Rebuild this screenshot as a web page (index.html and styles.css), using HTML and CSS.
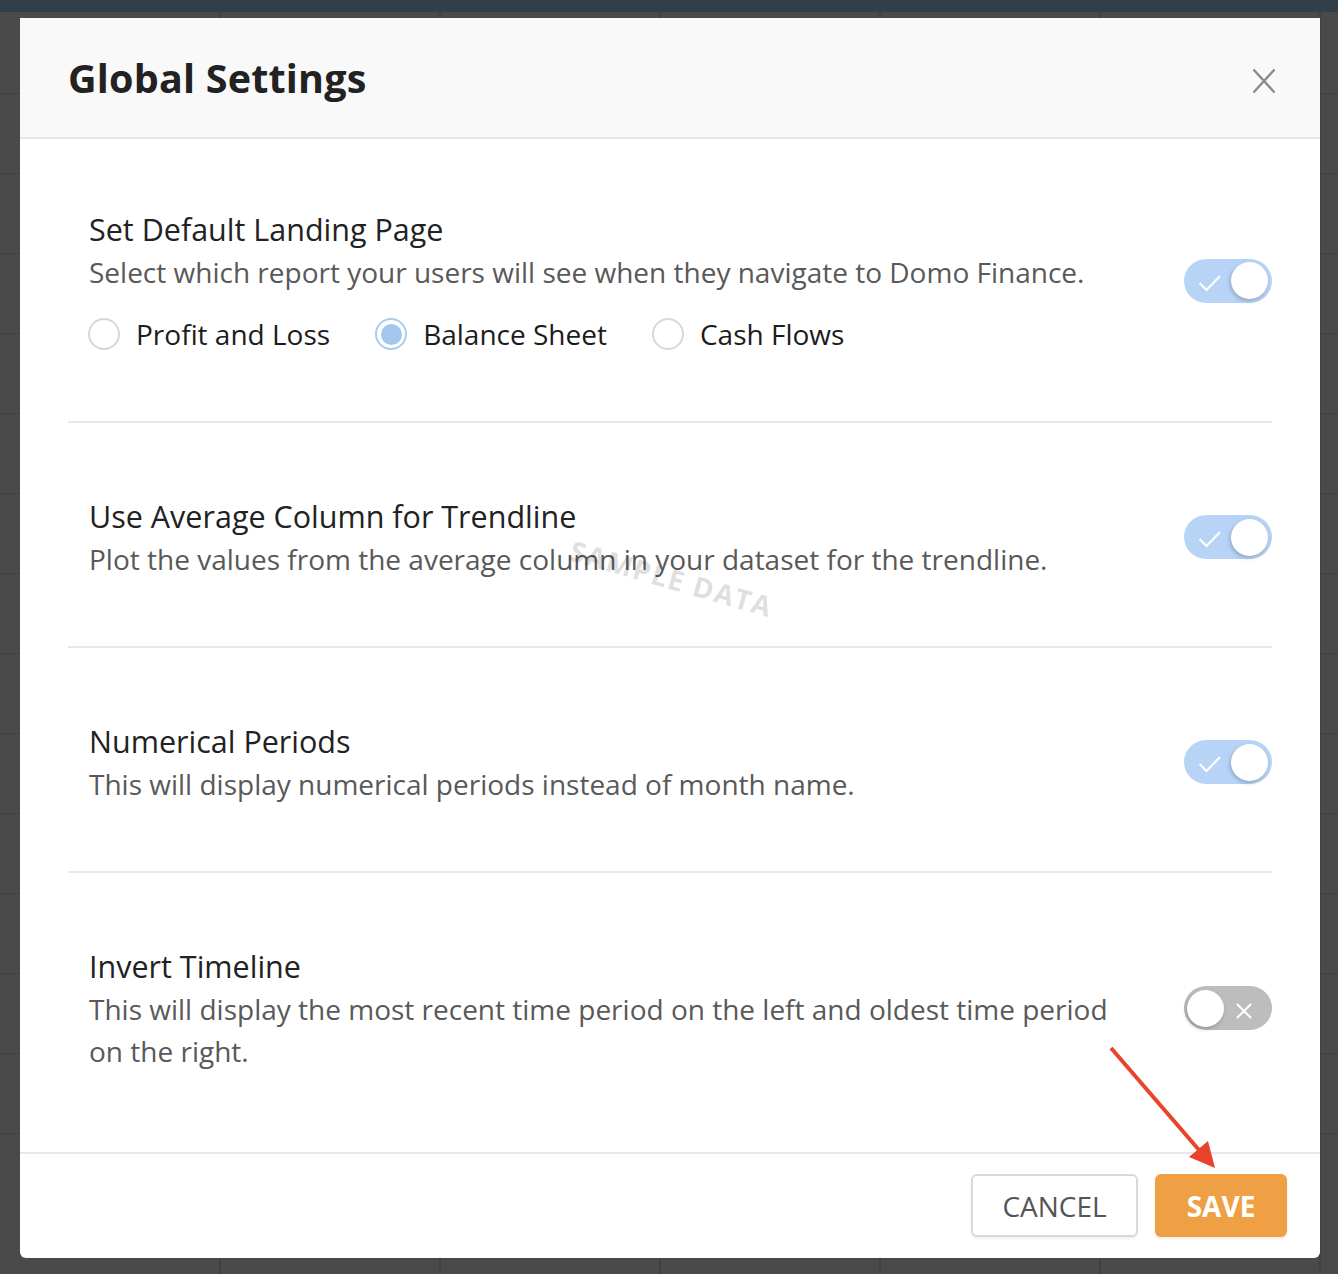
FILE: index.html
```html
<!DOCTYPE html>
<html lang="en">
<head>
<meta charset="utf-8">
<title>Global Settings</title>
<link rel="stylesheet" href="styles.css">
</head>
<body>
<div class="modal">
  <div class="modal-header">
    <h1 class="modal-title">Global Settings</h1>
    <button class="close-btn" aria-label="Close">
      <svg width="24" height="26" viewBox="0 0 24 26"><path d="M1.5 1.5 L22.5 24.5 M22.5 1.5 L1.5 24.5" stroke="#8a8a8a" stroke-width="2.4" fill="none"/></svg>
    </button>
  </div>
  <div class="modal-body">
    <div class="section first">
      <div class="section-text">
        <div class="section-title">Set Default Landing Page</div>
        <div class="section-desc">Select which report your users will see when they navigate to Domo Finance.</div>
        <div class="radio-row">
          <label class="radio"><span class="radio-circle"></span><span class="radio-label">Profit and Loss</span></label>
          <label class="radio"><span class="radio-circle checked"></span><span class="radio-label">Balance Sheet</span></label>
          <label class="radio"><span class="radio-circle"></span><span class="radio-label">Cash Flows</span></label>
        </div>
      </div>
      <div class="toggle on">
        <svg class="toggle-icon" width="24" height="18" viewBox="0 0 24 18"><path d="M1.5 9 L8.5 16 L22 2" stroke="#fff" stroke-width="2" fill="none"/></svg>
        <span class="knob"></span>
      </div>
    </div>
    <div class="section">
      <div class="section-text">
        <div class="section-title">Use Average Column for Trendline</div>
        <div class="section-desc">Plot the values from the average column in your dataset for the trendline.</div>
      </div>
      <div class="toggle on">
        <svg class="toggle-icon" width="24" height="18" viewBox="0 0 24 18"><path d="M1.5 9 L8.5 16 L22 2" stroke="#fff" stroke-width="2" fill="none"/></svg>
        <span class="knob"></span>
      </div>
    </div>
    <div class="section">
      <div class="section-text">
        <div class="section-title">Numerical Periods</div>
        <div class="section-desc">This will display numerical periods instead of month name.</div>
      </div>
      <div class="toggle on">
        <svg class="toggle-icon" width="24" height="18" viewBox="0 0 24 18"><path d="M1.5 9 L8.5 16 L22 2" stroke="#fff" stroke-width="2" fill="none"/></svg>
        <span class="knob"></span>
      </div>
    </div>
    <div class="section last">
      <div class="section-text">
        <div class="section-title">Invert Timeline</div>
        <div class="section-desc">This will display the most recent time period on the left and oldest time period on the right.</div>
      </div>
      <div class="toggle off">
        <span class="knob"></span>
        <svg class="toggle-icon" width="18" height="18" viewBox="0 0 18 18"><path d="M2 2 L16 16 M16 2 L2 16" stroke="#fff" stroke-width="2" fill="none"/></svg>
      </div>
    </div>
  </div>
  <div class="modal-footer">
    <button class="btn btn-cancel">CANCEL</button>
    <button class="btn btn-save">SAVE</button>
  </div>
  <div class="watermark">SAMPLE DATA</div>
  <svg class="arrow" width="140" height="140" viewBox="0 0 140 140">
    <line x1="11" y1="10" x2="99" y2="112" stroke="#e8432b" stroke-width="4"/>
    <polygon points="115,130 89,119 108,103" fill="#e8432b"/>
  </svg>
</div>
</body>
</html>
```

FILE: styles.css
```css
* { box-sizing: border-box; }

html, body {
  margin: 0;
  height: 1274px;
  overflow: hidden;
}

body {
  padding: 18px 18px 0 20px;
  font-family: "Open Sans", "Noto Sans", sans-serif;
  background-color: #4a4a4a;
  background-image:
    linear-gradient(#323e48, #323e48),
    repeating-linear-gradient(90deg, transparent 0 218px, rgba(0,0,0,0.14) 218px 220px),
    repeating-linear-gradient(180deg, transparent 0 79px, rgba(0,0,0,0.14) 79px 80px);
  background-size: 100% 12px, 100% 100%, 100% 1196px;
  background-repeat: no-repeat, no-repeat, no-repeat;
  background-position: 0 0, 1px 0, 0 14px;
}

.modal {
  position: relative;
  width: 1300px;
  height: 1240px;
  background: #fff;
  border-radius: 0 0 6px 6px;
  display: flex;
  flex-direction: column;
}

.modal-header {
  height: 121px;
  flex: none;
  background: #f9f9f9;
  border-bottom: 2px solid #e6e6e6;
  display: flex;
  align-items: center;
  justify-content: space-between;
  padding: 0 44px 0 48px;
}

.modal-title {
  margin: 0;
  font-size: 39.5px;
  font-weight: 700;
  color: #222;
  letter-spacing: 0.2px;
}

.close-btn {
  border: 0;
  background: transparent;
  padding: 0;
  margin-top: 6px;
  display: flex;
}

.modal-body {
  flex: 1;
  padding: 0 48px;
}

.section {
  display: flex;
  align-items: center;
  padding: 71px 0 66px 21px;
  border-bottom: 2px solid #e8e8e8;
}

.section.first { padding-top: 68px; padding-bottom: 67px; }
.section.last { border-bottom: 0; }

.section-text {
  flex: 1;
  padding-right: 60px;
}

.section-title {
  font-size: 30.5px;
  line-height: 44px;
  color: #222;
}

.section-desc {
  font-size: 28px;
  line-height: 42px;
  color: #595959;
}

.radio-row {
  display: flex;
  gap: 46px;
  margin-top: 21px;
  height: 40px;
  align-items: center;
}

.radio {
  display: flex;
  align-items: center;
  gap: 16px;
}

.radio-circle {
  width: 32px;
  height: 32px;
  border-radius: 50%;
  border: 2px solid #d8d8d8;
  background: #fff;
  position: relative;
  margin-left: -1px;
}

.radio-circle.checked {
  border: 2.5px solid #a9cbef;
}

.radio-circle.checked::after {
  content: "";
  position: absolute;
  left: 50%;
  top: 50%;
  width: 21px;
  height: 21px;
  margin: -10.5px 0 0 -10.5px;
  border-radius: 50%;
  background: #a4c7ed;
}

.radio-label {
  font-size: 28px;
  color: #1c1c1c;
}

.toggle {
  flex: none;
  width: 88px;
  height: 44px;
  border-radius: 22px;
  display: flex;
  align-items: center;
  padding: 0 4px;
}

.toggle.on {
  background: #b7d4f6;
  justify-content: space-between;
  padding-left: 14px;
}

.toggle.off {
  background: #bdbdbd;
  justify-content: space-between;
  padding: 0 19px 0 3px;
}

.toggle.on .toggle-icon { margin-top: 4px; }
.toggle.off .toggle-icon { margin-top: 6px; }

.knob {
  width: 37px;
  height: 37px;
  border-radius: 50%;
  background: #fff;
  box-shadow: -1px 2px 4px rgba(0,0,0,0.22);
}

.modal-footer {
  flex: none;
  border-top: 2px solid #e8e8e8;
  display: flex;
  justify-content: flex-end;
  gap: 17px;
  padding: 20px 33px 21px;
}

.btn {
  height: 63px;
  border-radius: 6px;
  font-family: "Open Sans", "Noto Sans", sans-serif;
  font-size: 28px;
  cursor: pointer;
  padding: 0;
}

.btn-cancel {
  width: 167px;
  background: #fff;
  border: 2px solid #d9d9d9;
  color: #555;
  box-shadow: 0 2px 3px rgba(0,0,0,0.06);
}

.btn-save {
  width: 132px;
  background: #f0a044;
  border: 0;
  color: #fff;
  font-weight: 700;
  box-shadow: 0 2px 3px rgba(0,0,0,0.08);
}

.watermark {
  position: absolute;
  left: 556px;
  top: 513px;
  font-size: 28px;
  font-weight: 700;
  letter-spacing: 1.5px;
  color: rgba(0,0,0,0.14);
  transform: rotate(16deg);
  transform-origin: left top;
  white-space: nowrap;
  pointer-events: none;
}

.arrow {
  position: absolute;
  left: 1080px;
  top: 1020px;
  pointer-events: none;
}
```
